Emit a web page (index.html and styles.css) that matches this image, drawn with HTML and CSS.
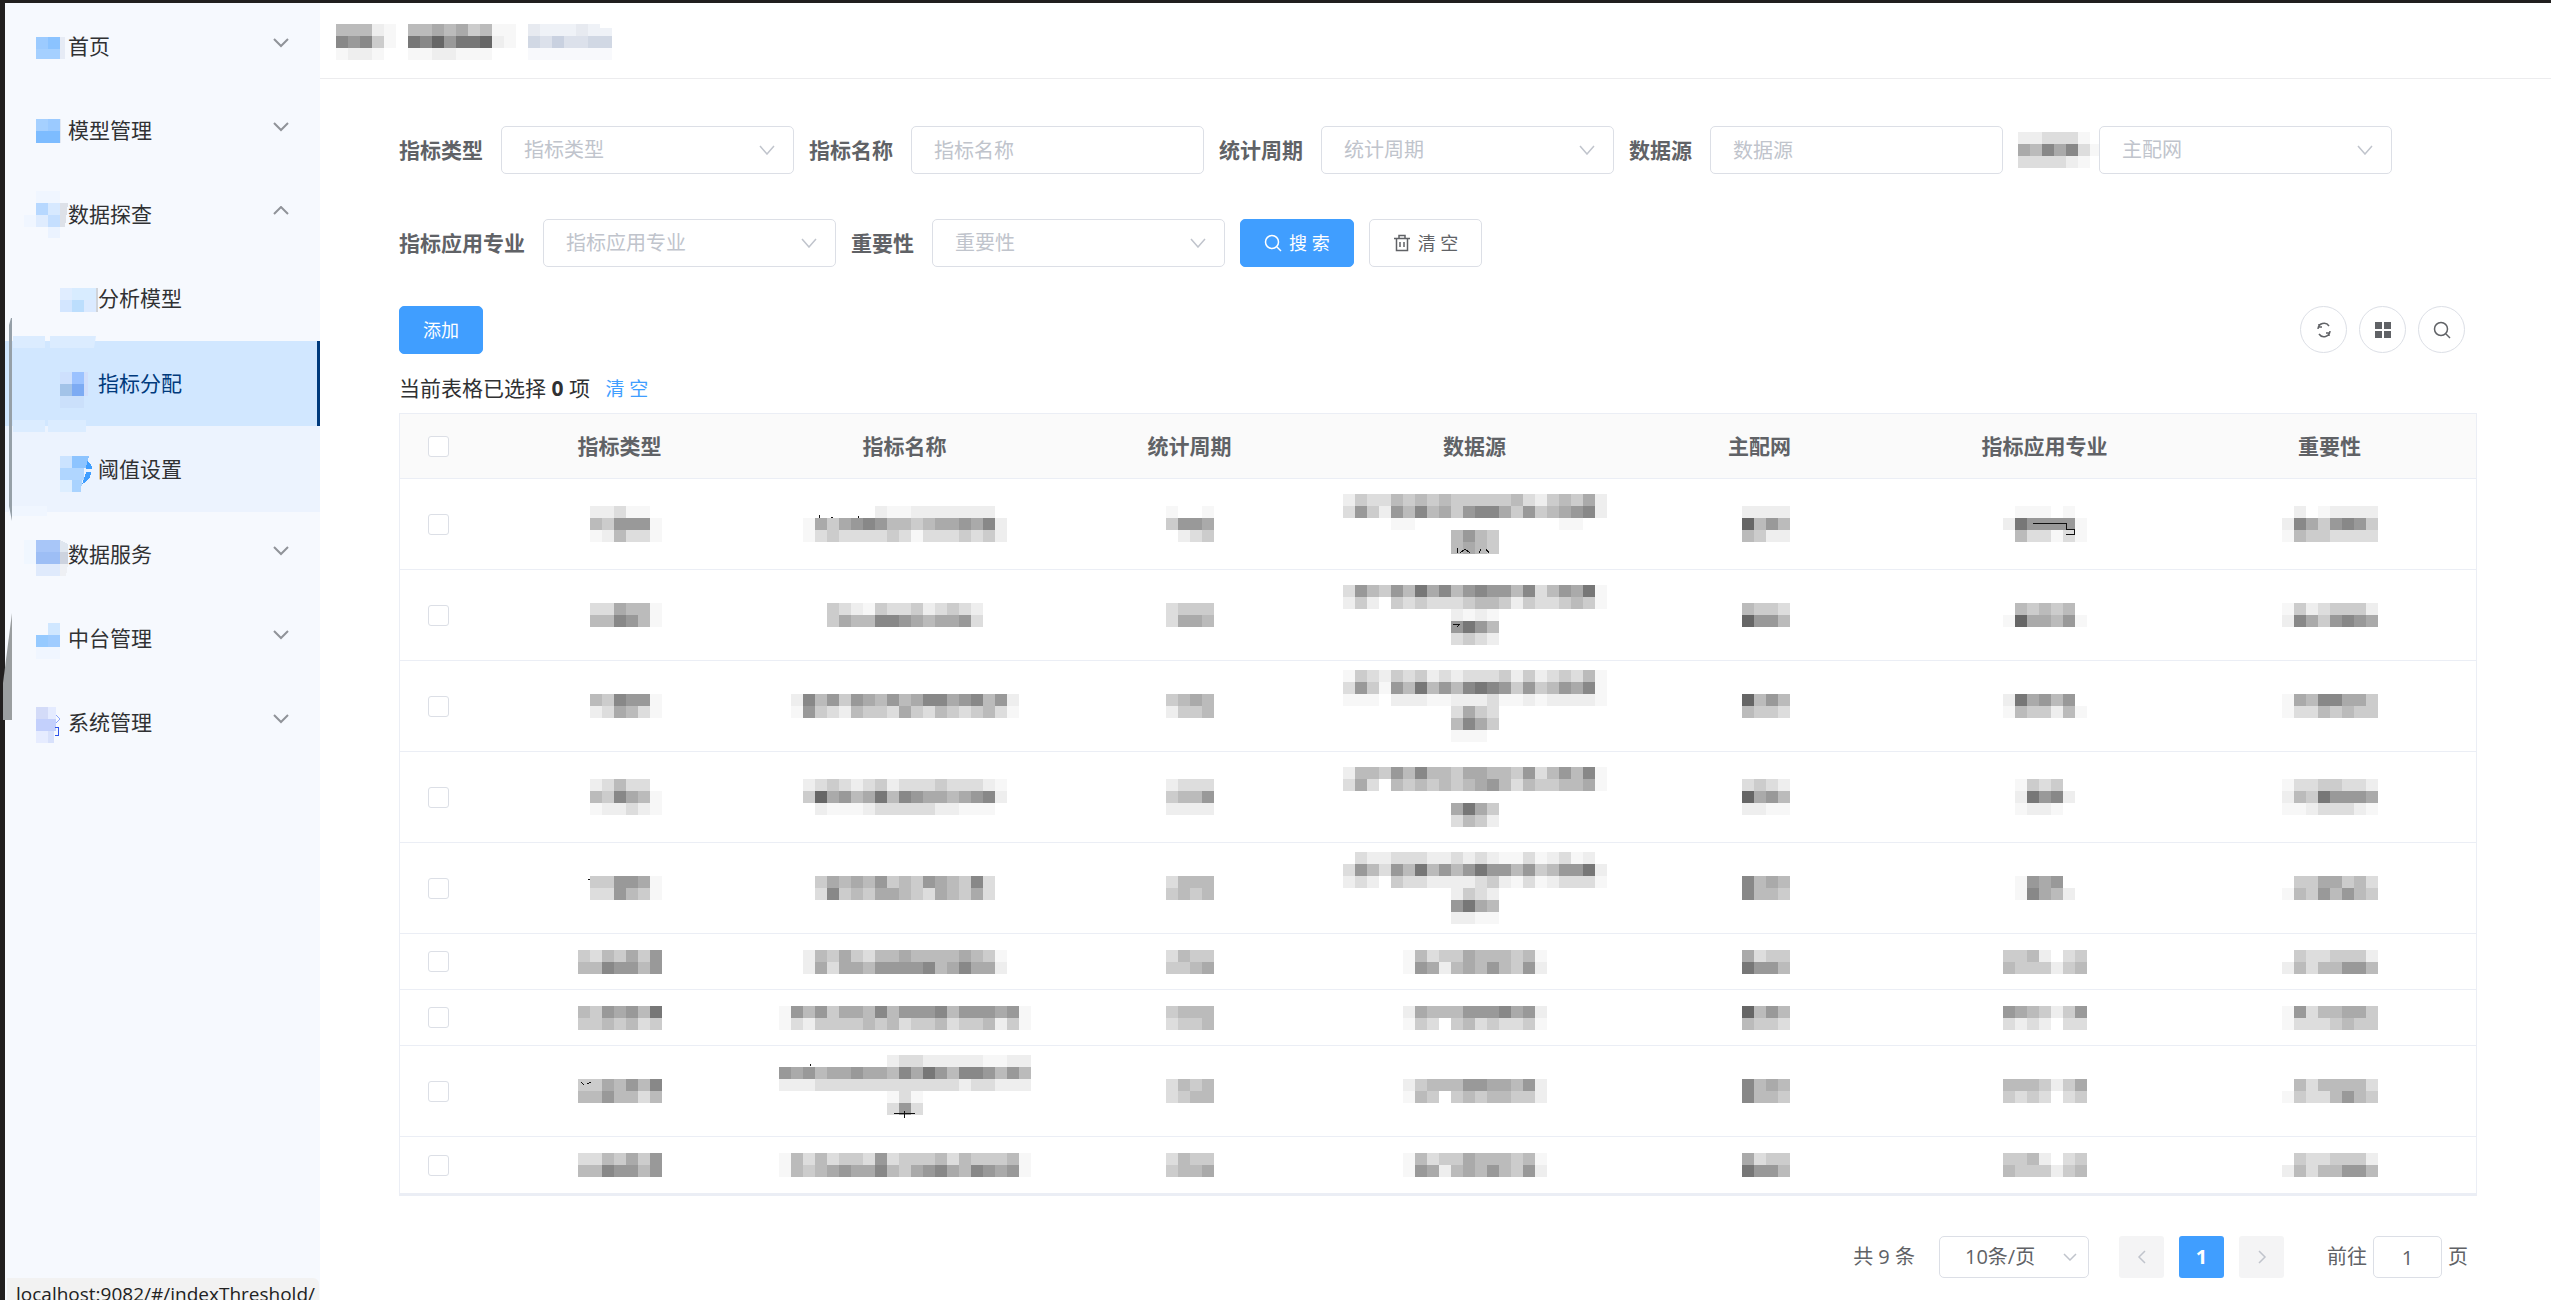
FILE: index.html
```html
<!DOCTYPE html>
<html lang="zh-CN">
<head>
<meta charset="utf-8">
<title>指标分配</title>
<link rel="stylesheet" href="styles.css">
</head>
<body>
<div class="app">
  <aside class="sidebar">
    <nav class="menu">
      <a class="item" href="#home">
        <svg class="item-icon" width="44" height="48"><path fill="#9ccbff" d="M12 15h12v12H12z"/><path fill="#8bc3ff" d="M24 15h12v12H24z"/><path fill="#a5d0ff" d="M12 27h24v10H12z"/><path fill="#e6ebf5" d="M36 15h5v22h-5z"/></svg>
        <span class="item-text">首页</span>
        <svg class="arrow" width="16" height="16"><path d="M1 1l7 7 7-7"/></svg>
      </a>
      <a class="item" href="#model">
        <svg class="item-icon" width="44" height="48"><path fill="#a5d0ff" d="M12 13h12v12H12z"/><path fill="#9bcaff" d="M24 13h12v12H24z"/><path fill="#7dbcff" d="M12 25h24v12H12z"/><path fill="#e2e8f2" d="M36 13h1v24h-1z"/></svg>
        <span class="item-text">模型管理</span>
        <svg class="arrow" width="16" height="16"><path d="M1 1l7 7 7-7"/></svg>
      </a>
      <a class="item" href="#explore">
        <svg class="item-icon" width="44" height="48"><path fill="#f0f6ff" d="M12 1h24v12H12zM0 25h12v12H0z"/><path fill="#b7d8ff" d="M12 13h12v12H12z"/><path fill="#d7e9ff" d="M24 13h12v12H24z"/><path fill="#dde1e8" d="M36 13h8l-3 24h-5z"/><path fill="#dfecfe" d="M12 25h12v12H12z"/><path fill="#c5dfff" d="M24 25h12v12H24z"/><path fill="#ebf3ff" d="M24 37h12v11H24z"/></svg>
        <span class="item-text">数据探查</span>
        <svg class="arrow" width="16" height="16"><path d="M1 8l7-7 7 7"/></svg>
      </a>
      <div class="submenu">
        <a class="item sub" href="#analysis">
          <svg class="item-icon" width="38" height="48"><path fill="#e0edff" d="M0 13h12v12H0z"/><path fill="#d8ecff" d="M12 13h24v12H12z"/><path fill="#d3e6ff" d="M0 25h12v12H0z"/><path fill="#bcdefd" d="M12 25h12v12H12z"/><path fill="#dbeaff" d="M24 25h12v12H24z"/><path fill="#d0d4da" d="M36 13h2v24h-2z"/></svg>
          <span class="item-text">分析模型</span>
        </a>
        <a class="item sub active" href="#assign" aria-current="page">
          <svg class="item-icon" width="38" height="48"><path fill="#cee0fd" d="M0 12h12v12H0z"/><path fill="#9bc2ff" d="M12 12h12v12H12z"/><path fill="#d0defb" d="M24 12h4v24h-4z"/><path fill="#a3c3e8" d="M0 24h12v12H0z"/><path fill="#7dabf3" d="M12 24h12v12H12z"/><path fill="#cbe0fb" d="M0 36h24v12H0z"/></svg>
          <span class="item-text">指标分配</span>
        </a>
        <a class="item sub open" href="#threshold">
          <svg class="item-icon" width="38" height="48"><path fill="#cbe3ff" d="M0 11h12v12H0z"/><path fill="#8dc4ff" d="M12 11h17l-3 12H12z"/><path fill="#b0d6ff" d="M0 23h24v12H0z"/><path fill="#ddeeff" d="M0 35h12v12H0z"/><path fill="#a9d3ff" d="M12 35h10l-1 12h-9z"/><path fill="#409eff" d="M27 16q5 3 5 8h-6zM26 27h5q0 8-9 12l3-8z"/></svg>
          <span class="item-text">阈值设置</span>
        </a>
      </div>
      <a class="item" href="#service">
        <svg class="item-icon" width="44" height="48"><path fill="#f0f7ff" d="M0 10h12v24H0z"/><path fill="#a8c6f8" d="M12 10h24v12H12z"/><path fill="#9dbef5" d="M12 22h24v12H12z"/><path fill="#dfeafc" d="M12 34h24v12H12z"/><path fill="#dfe6ef" d="M36 10l8 4v8h-8z"/><path fill="#cdd3df" d="M36 22h8v12h-8z"/><path fill="#eef0f4" d="M36 34h8l-2 12h-6z"/></svg>
        <span class="item-text">数据服务</span>
        <svg class="arrow" width="16" height="16"><path d="M1 1l7 7 7-7"/></svg>
      </a>
      <a class="item" href="#platform">
        <svg class="item-icon" width="44" height="48"><path fill="#d0e7ff" d="M24 9h12v12H24z"/><path fill="#96caff" d="M12 21h12v12H12z"/><path fill="#9fccff" d="M24 21h12v12H24z"/><path fill="#f0f6ff" d="M12 33h24v12H12z"/></svg>
        <span class="item-text">中台管理</span>
        <svg class="arrow" width="16" height="16"><path d="M1 1l7 7 7-7"/></svg>
      </a>
      <a class="item" href="#system">
        <svg class="item-icon" width="44" height="48"><path fill="#d3dbf8" d="M12 9h12v12H12z"/><path fill="#e4ebff" d="M24 9h8v12h-8z"/><path fill="#c3d0fc" d="M12 21h20v12H12z"/><path fill="#e6ecff" d="M12 33h12v12H12z"/><path fill="#d8e1fb" d="M24 33h6v12h-6z"/><path fill="none" stroke="#8aa5ff" d="M32 17l4 4-4 4"/><path fill="none" stroke="#2f54eb" d="M31 29h3v8h-3"/></svg>
        <span class="item-text">系统管理</span>
        <svg class="arrow" width="16" height="16"><path d="M1 1l7 7 7-7"/></svg>
      </a>
    </nav>
    <svg class="smudges" width="100" height="740"><path fill="#dbecff" d="M13 336h32v12H13zM50 336h46l-2 12H50zM13 420h32v12H13zM48 420h38v12H48z"/><path fill="#f0f6ff" d="M9 506h38v10H9z"/><path fill="#96a0a8" d="M9 325l2-7h1v203l-3-15z"/><path fill="#9a9ea0" d="M3 720v-37l9-70v107z"/></svg>
    <div class="status">localhost:9082/#/indexThreshold/</div>
  </aside>

  <div class="page">
    <header class="crumbs">
      <svg class="mosaic" role="img" aria-label="面包屑一" data-px="bbbef|898cf|feef."></svg>
      <svg class="mosaic" role="img" aria-label="面包屑二" data-px="bbabacbff|7869776ef|ffeefff.."></svg>
      <svg width="84" height="36" role="img" aria-label="面包屑三" shape-rendering="crispEdges"><path fill="#e7eaf0" d="M0 0h12v12H0zM48 0h12v12H48z"/><path fill="#eff2f7" d="M12 0h36v12H12zM60 0h12v12H60zM72 4h12v8H72z"/><path fill="#d1d8e4" d="M0 12h12v12H0zM60 12h24v12H60z"/><path fill="#dce1eb" d="M12 12h12v12H12zM36 12h24v12H36z"/><path fill="#c9d1e0" d="M24 12h12v12H24z"/><path fill="#f8f9fc" d="M0 24h84v12H0z"/></svg>
    </header>

    <main class="content">
      <form class="filters" onsubmit="return false">
        <div class="field"><label for="f-type">指标类型</label>
          <span class="select"><select id="f-type" class="control"><option>指标类型</option></select><svg class="caret" width="16" height="10"><path d="M1 1l7 8 7-8"/></svg></span></div>
        <div class="field"><label for="f-name">指标名称</label><input id="f-name" class="control" type="text" placeholder="指标名称"></div>
        <div class="field"><label for="f-period">统计周期</label>
          <span class="select"><select id="f-period" class="control"><option>统计周期</option></select><svg class="caret" width="16" height="10"><path d="M1 1l7 8 7-8"/></svg></span></div>
        <div class="field"><label for="f-source">数据源</label><input id="f-source" class="control" type="text" placeholder="数据源"></div>
        <div class="field"><label for="f-net" class="masked"><svg class="mosaic" role="img" aria-label="主配网" data-px="eedddf.|ab8a8df|ddddef."></svg></label>
          <span class="select"><select id="f-net" class="control"><option>主配网</option></select><svg class="caret" width="16" height="10"><path d="M1 1l7 8 7-8"/></svg></span></div>
        <div class="field"><label for="f-major">指标应用专业</label>
          <span class="select"><select id="f-major" class="control"><option>指标应用专业</option></select><svg class="caret" width="16" height="10"><path d="M1 1l7 8 7-8"/></svg></span></div>
        <div class="field"><label for="f-weight">重要性</label>
          <span class="select"><select id="f-weight" class="control"><option>重要性</option></select><svg class="caret" width="16" height="10"><path d="M1 1l7 8 7-8"/></svg></span></div>
        <button class="btn primary" type="submit"><svg class="icon" width="18" height="18"><circle cx="8" cy="8" r="6.5"/><path d="M13 13l4 4"/></svg>搜 索</button>
        <button class="btn" type="reset"><svg class="icon" width="18" height="18"><path d="M1 4.500h16M6 4V1.500h6V4M3.500 4.500v12h11v-12M7 8v5M11 8v5"/></svg>清 空</button>
      </form>

      <div class="toolbar">
        <button class="btn primary" type="button">添加</button>
        <div class="tools">
          <button class="round" type="button" aria-label="刷新"><svg class="icon" width="18" height="18"><path d="M3 8a6 6 0 0 1 11-3M15 10a6 6 0 0 1-11 3M4 3v3h3M14 15v-3h-3"/></svg></button>
          <button class="round" type="button" aria-label="列设置"><svg width="16" height="16" fill="#606266"><path d="M0 0h7v7H0zM9 0h7v7H9zM0 9h7v7H0zM9 9h7v7H9z"/></svg></button>
          <button class="round" type="button" aria-label="搜索"><svg class="icon" width="18" height="18"><circle cx="8" cy="8" r="6.5"/><path d="M13 13l4 4"/></svg></button>
        </div>
      </div>

      <p class="selection">当前表格已选择 <b>0</b> 项 <a href="#clear">清 空</a></p>

      <div class="table-wrap">
        <table>
          <colgroup><col class="c-check"><col><col><col><col><col><col><col><col class="c-gutter"></colgroup>
          <thead>
            <tr><th><input type="checkbox" aria-label="全选"></th><th>指标类型</th><th>指标名称</th><th>统计周期</th><th>数据源</th><th>主配网</th><th>指标应用专业</th><th>重要性</th><th></th></tr>
          </thead>
          <tbody>
            <tr>
              <td><input type="checkbox" aria-label="选择第1行"></td>
              <td><svg class="mosaic" data-px=".eedff.|.bc999f|.febddf"></svg></td>
              <td><svg class="mosaic" data-px="......effeeeeeee.|faca989bbcbaa9a8e|fdcddddcdfdddcdce" data-ink="M16 9v3M28 11h2M55 10v2"></svg></td>
              <td><svg class="mosaic" data-px="f..f|c99a|.edc"></svg></td>
              <td><svg class="mosaic" data-px="ecddbcbcbcccccbdecbcae|d9ce9b8bac988ac9cba98e|....ff............ff..|.........b9bc.........|.........babc........." data-ink="M114 54v5M117 59l5-4 5 4M138 55l-2 4M143 55l3 4"></svg></td>
              <td><svg class="mosaic" data-px=".eeee|.6b9b|.bcee"></svg></td>
              <td><svg class="mosaic" data-px=".fff.f.|e79999f|.bddfdf" data-ink="M30 17h33v6h8v5h-8"></svg></td>
              <td><svg class="mosaic" data-px=".e.feeee|e8ac989c|fbccdddd"></svg></td><td></td>
            </tr>
            <tr>
              <td><input type="checkbox" aria-label="选择第2行"></td>
              <td><svg class="mosaic" data-px=".ddabbf|.bb89bf"></svg></td>
              <td><svg class="mosaic" data-px="cdefcddcedcde|cabb889abaa9d"></svg></td>
              <td><svg class="mosaic" data-px="dccc|daab"></svg></td>
              <td><svg class="mosaic" data-px="d9bc9b7a8b9899b8db9a7f|ece.cdcdddcbbcecddcbcf|.........efef.........|.........979b.........|.........dcde........." data-ink="M110 39h7l-3 3"></svg></td>
              <td><svg class="mosaic" data-px=".bccd|.699b"></svg></td>
              <td><svg class="mosaic" data-px=".bcbcb.|f6aab9f"></svg></td>
              <td><svg class="mosaic" data-px="fcedccce|e8ac989a"></svg></td><td></td>
            </tr>
            <tr>
              <td><input type="checkbox" aria-label="选择第3行"></td>
              <td><svg class="mosaic" data-px=".bc899f|.edabdf"></svg></td>
              <td><svg class="mosaic" data-px="e8b9c9ab9ba88a98b9e|f9cdebccdacdbcdcbdf"></svg></td>
              <td><svg class="mosaic" data-px="cbab|eccb"></svg></td>
              <td><svg class="mosaic" data-px="fcdecdcededddcecedcdbf|d9cf9b7b9b8789c9cb9a8f|fff.eeeffeeedffefeeeef|.........dacd.........|.........b8ac.........|.........fff.........."></svg></td>
              <td><svg class="mosaic" data-px=".6b9b|.bccd"></svg></td>
              <td><svg class="mosaic" data-px="e7a9b9.|fbccebf"></svg></td>
              <td><svg class="mosaic" data-px="fab88aac|fddbcbcc"></svg></td><td></td>
            </tr>
            <tr>
              <td><input type="checkbox" aria-label="选择第4行"></td>
              <td><svg class="mosaic" data-px=".edbdd.|.bc8abf|.feedef"></svg></td>
              <td><svg class="mosaic" data-px="edcdedcedddcdddef|c6a9ba7b89aaba98e|.efffedddddeefff."></svg></td>
              <td><svg class="mosaic" data-px="eddd|cbb9|eeee"></svg></td>
              <td><svg class="mosaic" data-px="ebbc9b8bbcaabbc9db9b8f|dad.bcbcbcba9bdbccbbaf|......................|.........a7ac.........|.........dbce........."></svg></td>
              <td><svg class="mosaic" data-px=".dcde|.6a9b|.eeff"></svg></td>
              <td><svg class="mosaic" data-px=".fcdc..|.e798e.|.feef.."></svg></td>
              <td><svg class="mosaic" data-px="fddccdde|ebc7999a|ffedddef"></svg></td><td></td>
            </tr>
            <tr>
              <td><input type="checkbox" aria-label="选择第5行"></td>
              <td><svg class="mosaic" data-px=".cc99af|.dd9bcf" data-ink="M10 3h2"></svg></td>
              <td><svg class="mosaic" data-px="cabab9cbc9abc8d|d8cbcaabcdabcad"></svg></td>
              <td><svg class="mosaic" data-px="dbbb|cbcb"></svg></td>
              <td><svg class="mosaic" data-px=".deedddeededeffdfedfe.|d9bd9b7b9b9799b9cb997e|ede.cddeeeedcefdfedddf|.........ecde.........|.........97ab.........|.........eeff........."></svg></td>
              <td><svg class="mosaic" data-px=".8bab|.8bbc"></svg></td>
              <td><svg class="mosaic" data-px=".f9a9..|.f8abe."></svg></td>
              <td><svg class="mosaic" data-px=".ccaacbd|fbc9b9bc"></svg></td><td></td>
            </tr>
            <tr class="short">
              <td><input type="checkbox" aria-label="选择第6行"></td>
              <td><svg class="mosaic" data-px="cdbcac9|bb899b9"></svg></td>
              <td><svg class="mosaic" data-px="ebcacdbbabbbbabcf|eadaab99998ba8aae"></svg></td>
              <td><svg class="mosaic" data-px="dbcc|ccba"></svg></td>
              <td><svg class="mosaic" data-px="fbdccabbbcbf|f9aebab9bc9e"></svg></td>
              <td><svg class="mosaic" data-px=".adcc|.799b"></svg></td>
              <td><svg class="mosaic" data-px="ccbe.dc|bcccecb"></svg></td>
              <td><svg class="mosaic" data-px=".cddccce|ebdbb99b"></svg></td><td></td>
            </tr>
            <tr class="short">
              <td><input type="checkbox" aria-label="选择第7行"></td>
              <td><svg class="mosaic" data-px="bc9a9b7|ccbcbdc"></svg></td>
              <td><svg class="mosaic" data-px="f9b9caab8b9998b999a9f|fdeccccbcbdccbdccbecf"></svg></td>
              <td><svg class="mosaic" data-px="cbbb|dccb"></svg></td>
              <td><svg class="mosaic" data-px="eabbb9998a9e|fcd.cbdcddcf"></svg></td>
              <td><svg class="mosaic" data-px=".6b9b|.bccd"></svg></td>
              <td><svg class="mosaic" data-px="9abcec9|dede.dd"></svg></td>
              <td><svg class="mosaic" data-px="f9dbbaac|fdddcbcc"></svg></td><td></td>
            </tr>
            <tr>
              <td><input type="checkbox" aria-label="选择第8行"></td>
              <td><svg class="mosaic" data-px="ccab9b8|bb9bbdb" data-ink="M3 3l3 3M9 5l4-2"></svg></td>
              <td><svg class="mosaic" data-px=".........eddeeeeeffee|9a9baa9aab8a79b889b9b|eeeddddddddddddeddeee|.........fdf.........|.........d9d.........|....................." data-ink="M115 58h21M125 56v7M31 9v2"></svg></td>
              <td><svg class="mosaic" data-px="dbcb|dcbb"></svg></td>
              <td><svg class="mosaic" data-px="ecbbb99aab9e|fbc.cbcbbcce"></svg></td>
              <td><svg class="mosaic" data-px=".8bab|.8bbc"></svg></td>
              <td><svg class="mosaic" data-px="bbbceca|cdcd.dc"></svg></td>
              <td><svg class="mosaic" data-px=".bdbbbbd|fcddb9bc"></svg></td><td></td>
            </tr>
            <tr class="short">
              <td><input type="checkbox" aria-label="选择第9行"></td>
              <td><svg class="mosaic" data-px="ddbcac9|bb899b9"></svg></td>
              <td><svg class="mosaic" data-px="fbdbdccd9dcccbdbcccbf|fbcba9aa8bca98ab89a9f"></svg></td>
              <td><svg class="mosaic" data-px="dbcc|cbba"></svg></td>
              <td><svg class="mosaic" data-px="fbdccabbbcbf|f9aebab9bc9e"></svg></td>
              <td><svg class="mosaic" data-px=".adcc|.799b"></svg></td>
              <td><svg class="mosaic" data-px="ccbe.dc|bcccecb"></svg></td>
              <td><svg class="mosaic" data-px=".cddccce|ebdbb99b"></svg></td><td></td>
            </tr>
          </tbody>
        </table>
      </div>

      <footer class="pager">
        <span class="total">共 9 条</span>
        <span class="select size"><select class="control" aria-label="每页条数"><option>10条/页</option></select><svg class="caret" width="14" height="8"><path d="M1 1l6 6 6-6"/></svg></span>
        <div class="pages">
          <button type="button" aria-label="上一页" disabled><svg class="icon" width="10" height="16"><path d="M8 2L2 8l6 6"/></svg></button>
          <button type="button" class="current">1</button>
          <button type="button" aria-label="下一页" disabled><svg class="icon" width="10" height="16"><path d="M2 2l6 6-6 6"/></svg></button>
        </div>
        <label class="jump">前往 <input class="control" type="text" value="1"> 页</label>
      </footer>
    </main>
  </div>
</div>
<script src="mosaic.js"></script>
</body>
</html>
```

FILE: styles.css
```css
* { box-sizing: border-box; }

body {
  margin: 0;
  font-family: "Open Sans", "Noto Sans CJK SC", sans-serif;
  font-size: 21px;
  line-height: 1;
  color: #303133;
  background: #fff;
}

button, input, select { font: inherit; color: inherit; margin: 0; }
a { text-decoration: none; }
svg { display: block; flex: none; }

.app {
  display: flex;
  min-height: 100vh;
  border-top: 3px solid #211f1f;
  border-left: 5px solid #211f1f;
}

/* Sidebar */
.sidebar {
  position: relative;
  flex: none;
  width: 315px;
  display: flex;
  flex-direction: column;
  justify-content: space-between;
  background: #f6f9fe;
}
.menu { padding-top: 1px; }
.item {
  display: flex;
  align-items: center;
  height: 84px;
  padding: 0 31px 0 19px;
  color: #303133;
}
.item-icon { shape-rendering: crispEdges; }
.item-text { flex: 1; }
.arrow { fill: none; stroke: #909399; stroke-width: 2; }
.sub { height: 85px; padding-left: 55px; }
.active {
  color: #003a7c;
  background: #d1e7ff;
  border-right: 3px solid #003a7c;
}
.open { height: 86px; background: #ecf3fe; }
.smudges {
  position: absolute;
  top: -3px;
  left: -5px;
  pointer-events: none;
}
.status {
  position: fixed;
  left: 7px;
  bottom: 0;
  width: 312px;
  height: 22px;
  padding: 4px 9px 0;
  border-radius: 0 6px 0 0;
  overflow: hidden;
  background: #f2f2f2;
  color: #222;
  font-size: 19px;
  line-height: 24px;
  white-space: nowrap;
}

/* Page */
.page { flex: 1; min-width: 0; }
.crumbs {
  display: flex;
  gap: 12px;
  height: 76px;
  padding: 21px 16px 0;
  border-bottom: 1px solid #ececee;
}
.content { padding: 47px 74px 22px 79px; }

/* Filters */
.filters {
  display: flex;
  flex-wrap: wrap;
  gap: 45px 15px;
}
.field { display: flex; align-items: center; }
.field label {
  padding-right: 18px;
  font-weight: 700;
  color: #606266;
}
.field .masked { width: 81px; padding: 0; }
.control {
  width: 293px;
  height: 48px;
  padding: 0 22px;
  border: 1px solid #dcdfe6;
  border-radius: 5px;
  background: #fff;
  font-size: 20px;
}
.control::placeholder { color: #c0c4cc; }
.select { display: grid; align-items: center; }
.select > * { grid-area: 1 / 1; }
.select select { appearance: none; color: #c0c4cc; }
.caret {
  justify-self: end;
  margin-right: 19px;
  fill: none;
  stroke: #c0c4cc;
  stroke-width: 1.5;
  pointer-events: none;
}

.btn {
  display: flex;
  align-items: center;
  gap: 7px;
  height: 48px;
  padding: 0 23px;
  border: 1px solid #dcdfe6;
  border-radius: 5px;
  background: #fff;
  color: #606266;
  font-size: 18px;
}
.primary { border-color: #409eff; background: #409eff; color: #fff; }
.icon { fill: none; stroke: currentColor; stroke-width: 1.5; }

/* Toolbar */
.toolbar {
  display: flex;
  justify-content: space-between;
  margin-top: 39px;
  padding-right: 12px;
}
.tools { display: flex; gap: 12px; }
.round {
  display: grid;
  place-items: center;
  width: 47px;
  height: 47px;
  padding: 0;
  border: 1px solid #dcdfe6;
  border-radius: 50%;
  background: #fff;
  color: #606266;
}
.selection { margin: 11px 0 0; line-height: 47px; }
.selection a { margin-left: 10px; color: #409eff; font-size: 19px; }

/* Table */
.table-wrap { border: 1px solid #ebeef5; border-bottom-width: 3px; }
table { width: 100%; table-layout: fixed; border-spacing: 0; }
.c-check { width: 77px; }
.c-gutter { width: 4px; }
th, td { padding: 0; border-bottom: 1px solid #ebeef5; text-align: center; }
tbody tr:last-child td { border-bottom: 0; }
th { height: 65px; background: #fafafa; color: #606266; }
td { height: 91px; }
.short td { height: 56px; }
.mosaic { shape-rendering: crispEdges; }
td .mosaic { margin: 0 auto; }
input[type="checkbox"] {
  display: block;
  width: 21px;
  height: 21px;
  margin: 0 auto;
  appearance: none;
  border: 1px solid #dcdfe6;
  border-radius: 3px;
  background: #fff;
}

/* Pager */
.pager {
  display: flex;
  justify-content: flex-end;
  align-items: center;
  margin-top: 40px;
  padding-right: 9px;
  color: #606266;
  font-size: 20px;
}
.total { margin-right: 24px; }
.size .control { width: 150px; height: 42px; padding: 0 25px; color: #606266; }
.size .caret { margin-right: 12px; }
.pages { display: flex; gap: 15px; margin: 0 43px 0 30px; }
.pages button {
  display: grid;
  place-items: center;
  width: 45px;
  height: 42px;
  padding: 0;
  border: 0;
  border-radius: 3px;
  background: #f4f4f5;
  color: #c0c4cc;
}
.pages .current { background: #409eff; color: #fff; font-weight: 700; }
.jump { display: flex; align-items: center; gap: 6px; }
.jump .control { width: 69px; height: 42px; padding: 0; text-align: center; }
```

FILE: mosaic.js
```js
// Draws masked text as 12px grey blocks. Rows are split by "|",
// each hex digit is a grey level and "." is an empty block.
const CELL = 12;
const NS = 'http://www.w3.org/2000/svg';

document.querySelectorAll('.mosaic').forEach((svg) => {
  const rows = svg.dataset.px.split('|');
  const columns = Math.max(...rows.map((row) => row.length));
  svg.setAttribute('width', columns * CELL);
  svg.setAttribute('height', rows.length * CELL);

  rows.forEach((row, y) => {
    [...row].forEach((level, x) => {
      if (level === '.') return;
      const rect = document.createElementNS(NS, 'rect');
      rect.setAttribute('x', x * CELL);
      rect.setAttribute('y', y * CELL);
      rect.setAttribute('width', CELL);
      rect.setAttribute('height', CELL);
      rect.setAttribute('fill', level === 'f' ? '#f7f7f7' : '#' + level.repeat(3));
      svg.appendChild(rect);
    });
  });

  if (svg.dataset.ink) {
    const path = document.createElementNS(NS, 'path');
    path.setAttribute('d', svg.dataset.ink);
    path.setAttribute('fill', 'none');
    path.setAttribute('stroke', '#111');
    svg.appendChild(path);
  }
});
```
